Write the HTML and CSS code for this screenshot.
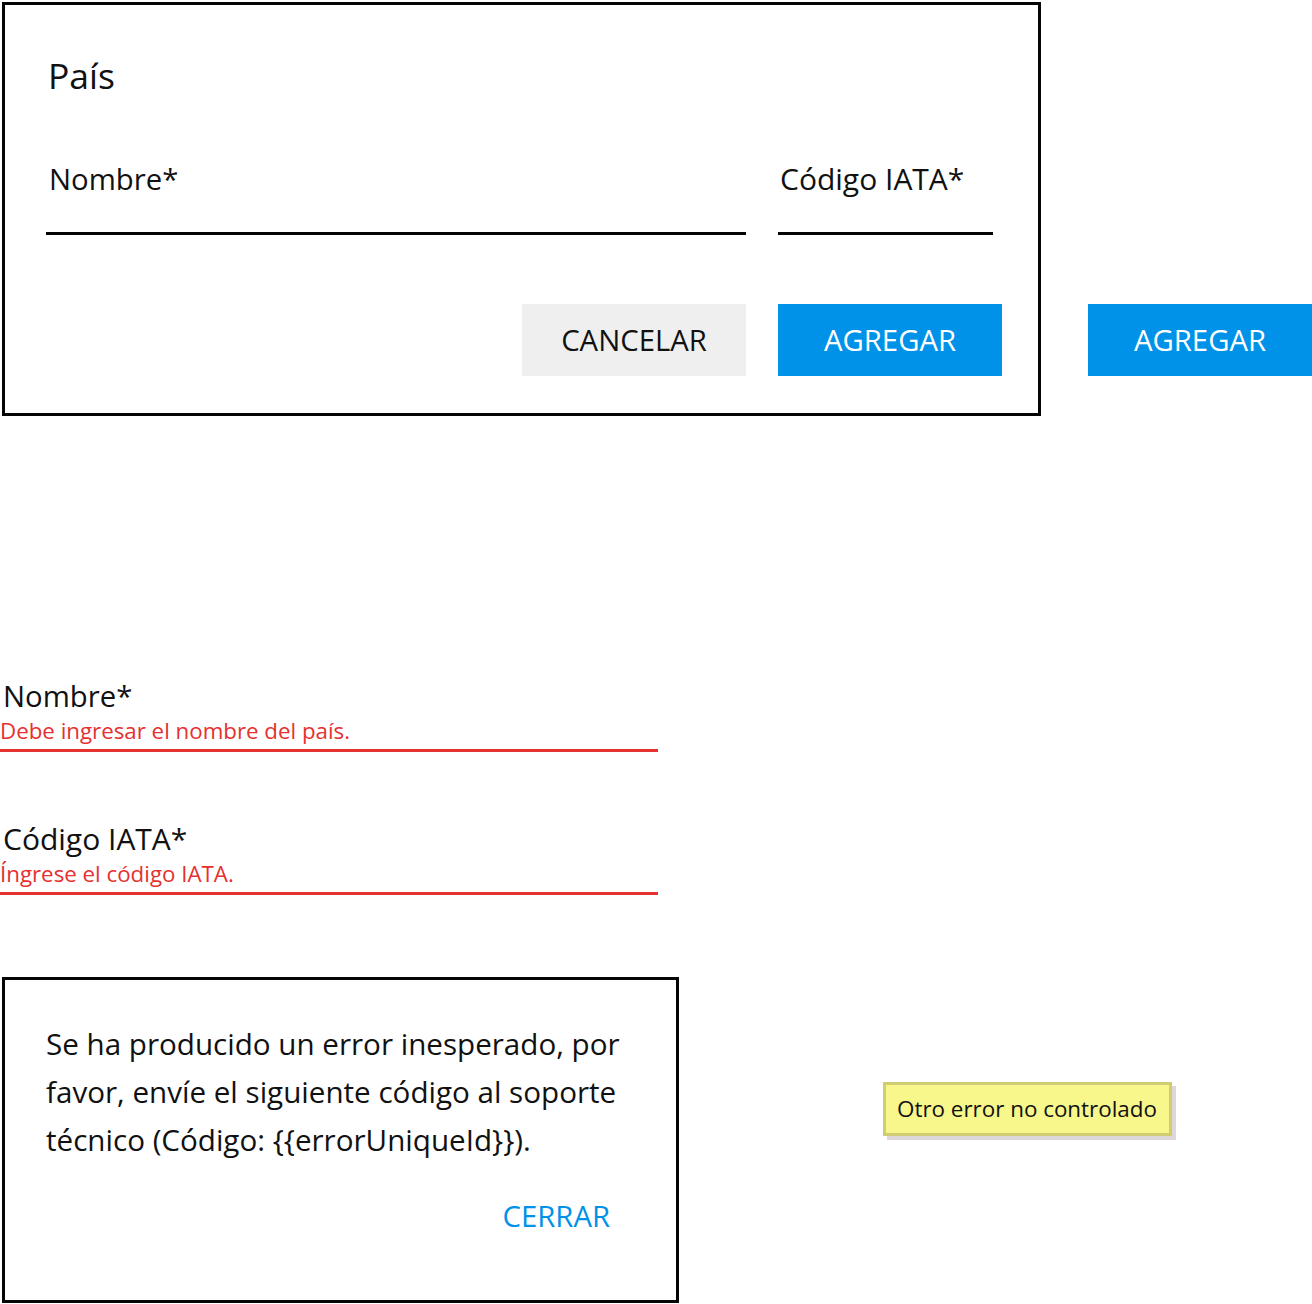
FILE: index.html
```html
<!DOCTYPE html>
<html lang="es">
<head>
<meta charset="utf-8">
<title>País</title>
<link rel="stylesheet" href="styles.css">
</head>
<body>
<div class="page">
  <section class="top-row">
    <div class="dialog form-dialog">
      <h1 class="title">País</h1>
      <div class="fields">
        <div class="field field-name">
          <label class="label">Nombre*</label>
        </div>
        <div class="field field-iata">
          <label class="label">Código IATA*</label>
        </div>
      </div>
      <div class="actions">
        <button class="btn btn-secondary">CANCELAR</button>
        <button class="btn btn-primary">AGREGAR</button>
      </div>
    </div>
    <div class="loose-button">
      <button class="btn btn-primary">AGREGAR</button>
    </div>
  </section>

  <section class="errors">
    <div class="err-field">
      <div class="err-label">Nombre*</div>
      <div class="err-msg">Debe ingresar el nombre del país.</div>
    </div>
    <div class="err-field second">
      <div class="err-label">Código IATA*</div>
      <div class="err-msg">Íngrese el código IATA.</div>
    </div>
  </section>

  <section class="bottom-row">
    <div class="dialog error-dialog">
      <p class="error-text">Se ha producido un error inesperado, por favor, envíe el siguiente código al soporte técnico (Código: {{errorUniqueId}}).</p>
      <div class="error-actions">
        <span class="link-btn">CERRAR</span>
      </div>
    </div>
    <div class="sticky">Otro error no controlado</div>
  </section>
</div>
</body>
</html>
```
FILE: styles.css
```css
* { box-sizing: border-box; }
html, body { margin: 0; padding: 0; background: #ffffff; }
body {
  font-family: "Open Sans", "Noto Sans", "DejaVu Sans", sans-serif;
  color: #111111;
  width: 1312px;
  height: 1304px;
  overflow: hidden;
}
.page { padding: 2px 0 0 2px; }

.top-row {
  display: flex;
  align-items: flex-start;
}
.dialog {
  border: 3px solid #050505;
  background: #ffffff;
}
.form-dialog {
  width: 1039px;
  height: 414px;
  padding: 50px 36px 0 41px;
}
.title {
  margin: 0 0 0 2px;
  font-size: 35.5px;
  font-weight: 400;
  line-height: 40px;
}
.fields {
  display: flex;
  gap: 32px;
  margin-top: 67px;
  margin-right: 9px;
}
.field {
  border-bottom: 3px solid #050505;
  padding: 0 0 36px 3px;
}
.field-name { width: 700px; }
.field-iata { width: 215px; padding-left: 2px; }
.label {
  display: block;
  font-size: 29.3px;
  line-height: 34px;
}
.field-iata .label { font-size: 30px; }
.actions {
  display: flex;
  justify-content: flex-end;
  gap: 32px;
  margin-top: 69px;
}
.btn {
  width: 224px;
  height: 72px;
  border: 0;
  padding: 0;
  font-family: inherit;
  font-size: 29.3px;
  line-height: 72px;
  text-align: center;
}
.btn-secondary { background: #efefef; color: #111111; }
.btn-primary { background: #0092e8; color: #ffffff; }
.loose-button {
  padding-top: 302px;
  margin-left: 47px;
}

.errors {
  margin-top: 263px;
  margin-left: -2px;
  width: 658px;
}
.err-field {
  border-bottom: 3px solid #e5312f;
}
.err-field.second { margin-top: 70px; }
.err-label {
  font-size: 29.3px;
  line-height: 34px;
  padding-left: 3px;
}
.err-field.second .err-label { font-size: 30px; }
.err-msg {
  color: #e5312f;
  font-size: 22.3px;
  line-height: 36px;
}

.bottom-row {
  display: flex;
  align-items: flex-start;
  margin-top: 82px;
}
.error-dialog {
  width: 677px;
  height: 326px;
  padding: 40px 0 0 41px;
}
.error-text {
  margin: 0;
  width: 605px;
  font-size: 29.6px;
  line-height: 48px;
}
.error-actions {
  display: flex;
  justify-content: flex-end;
  width: 564px;
  margin-top: 35px;
}
.link-btn {
  color: #0092e8;
  font-size: 29.3px;
  line-height: 34px;
}
.sticky {
  margin-left: 204px;
  margin-top: 105px;
  width: 289px;
  height: 54px;
  padding: 8px 0 0 11px;
  background: #f7f78c;
  border: 3px solid #cfcc72;
  box-shadow: 4px 4px 0 #ddd6da;
  font-size: 22.4px;
  line-height: 32px;
  color: #111111;
}
```
